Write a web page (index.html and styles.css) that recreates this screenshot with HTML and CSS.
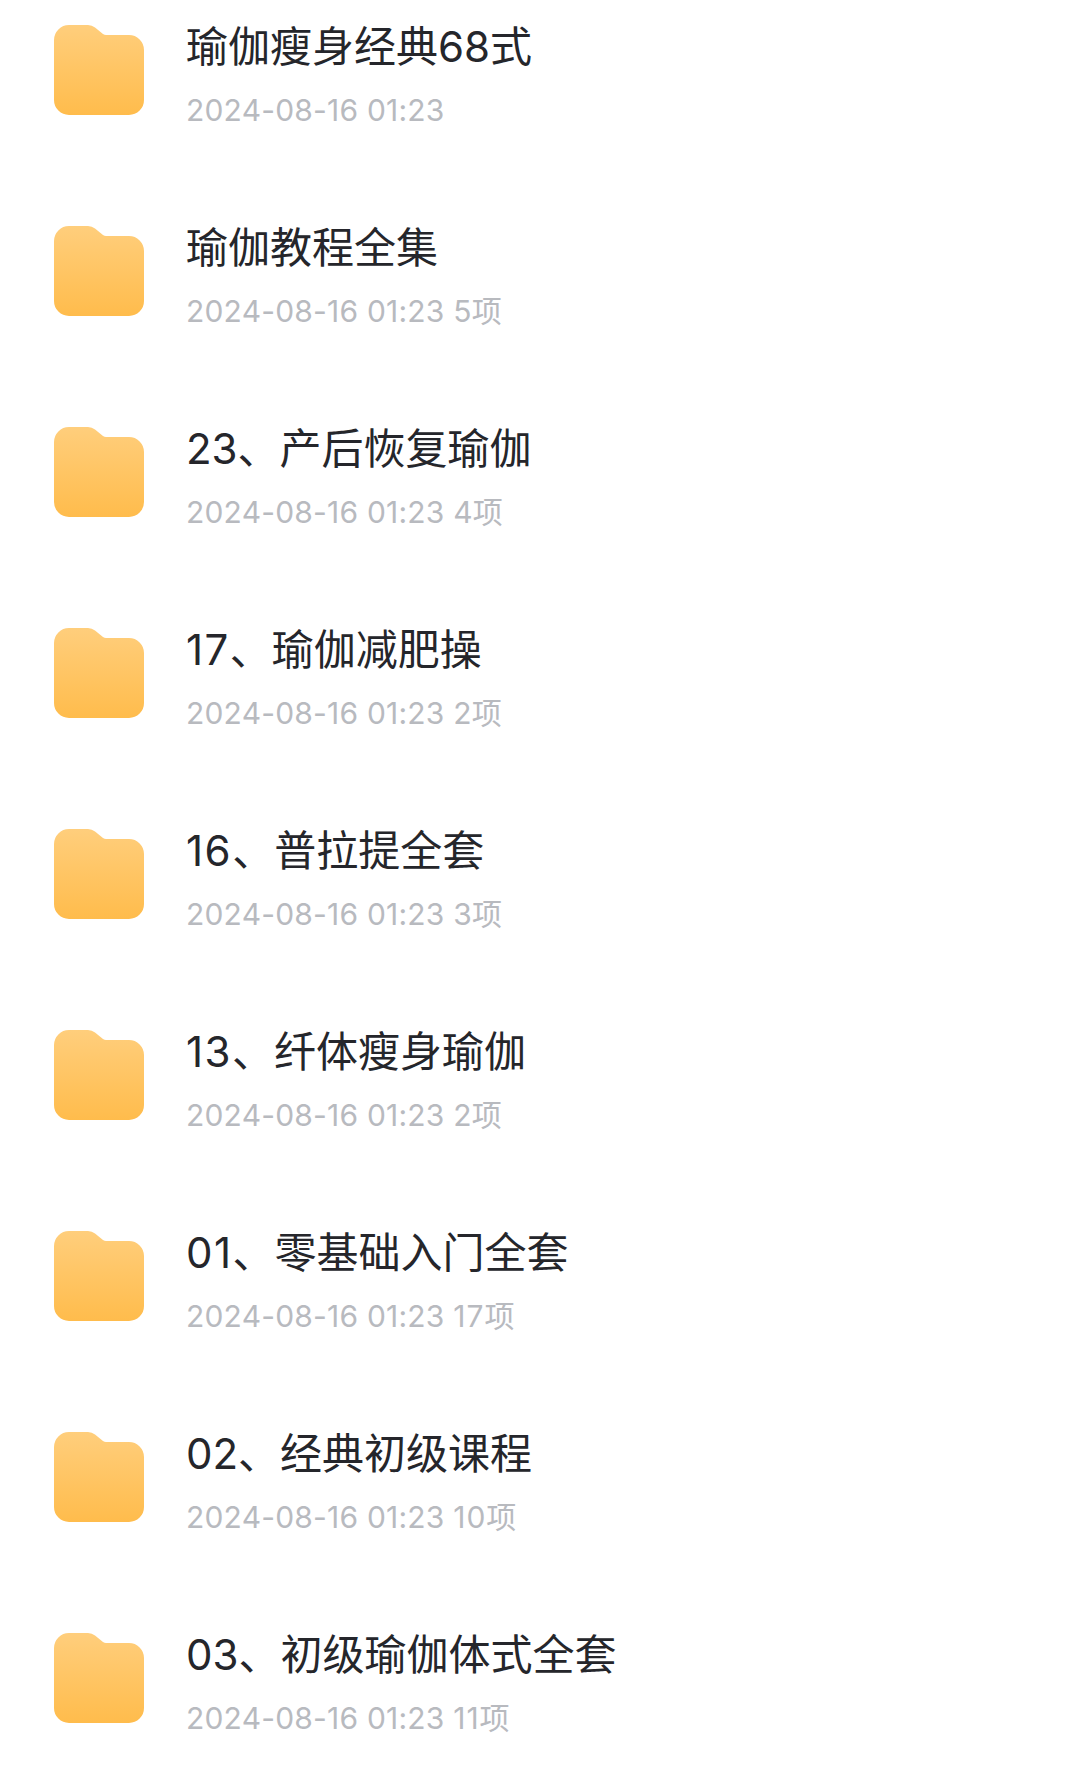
FILE: index.html
```html
<!DOCTYPE html>
<html lang="zh-CN">
<head>
  <meta charset="UTF-8" />
  <meta name="viewport" content="width=device-width, initial-scale=1.0" />
  <title>文件列表</title>
  <link rel="stylesheet" href="styles.css">
</head>
<body>
  <svg class="defs" width="0" height="0">
    <defs>
      <linearGradient id="folderFill" x1="0" y1="0" x2="0" y2="1">
        <stop offset="0" stop-color="#ffce7c" />
        <stop offset="1" stop-color="#ffbc4c" />
      </linearGradient>
      <symbol id="folder" viewBox="0 0 90 90">
        <path fill="url(#folderFill)" d="M15 0H34Q38 0 41 2.5L49 9Q50.500 10 52 10H75A15 15 0 0 1 90 25V75A15 15 0 0 1 75 90H15A15 15 0 0 1 0 75V15A15 15 0 0 1 15 0Z" />
      </symbol>
    </defs>
  </svg>

  <ul class="file-list">
    <li class="file-item">
      <svg class="folder-icon"><use href="#folder" /></svg>
      <div class="file-info">
        <div class="file-name">瑜伽瘦身经典68式</div>
        <div class="file-meta">2024-08-16 01:23</div>
      </div>
    </li>
    <li class="file-item">
      <svg class="folder-icon"><use href="#folder" /></svg>
      <div class="file-info">
        <div class="file-name">瑜伽教程全集</div>
        <div class="file-meta">2024-08-16 01:23 5项</div>
      </div>
    </li>
    <li class="file-item">
      <svg class="folder-icon"><use href="#folder" /></svg>
      <div class="file-info">
        <div class="file-name">23、产后恢复瑜伽</div>
        <div class="file-meta">2024-08-16 01:23 4项</div>
      </div>
    </li>
    <li class="file-item">
      <svg class="folder-icon"><use href="#folder" /></svg>
      <div class="file-info">
        <div class="file-name"><span class="num">17</span>、瑜伽减肥操</div>
        <div class="file-meta">2024-08-16 01:23 2项</div>
      </div>
    </li>
    <li class="file-item">
      <svg class="folder-icon"><use href="#folder" /></svg>
      <div class="file-info">
        <div class="file-name"><span class="num">16</span>、普拉提全套</div>
        <div class="file-meta">2024-08-16 01:23 3项</div>
      </div>
    </li>
    <li class="file-item">
      <svg class="folder-icon"><use href="#folder" /></svg>
      <div class="file-info">
        <div class="file-name"><span class="num">13</span>、纤体瘦身瑜伽</div>
        <div class="file-meta">2024-08-16 01:23 2项</div>
      </div>
    </li>
    <li class="file-item">
      <svg class="folder-icon"><use href="#folder" /></svg>
      <div class="file-info">
        <div class="file-name"><span class="num">01</span>、零基础入门全套</div>
        <div class="file-meta">2024-08-16 01:23 <span class="count">17</span>项</div>
      </div>
    </li>
    <li class="file-item">
      <svg class="folder-icon"><use href="#folder" /></svg>
      <div class="file-info">
        <div class="file-name">02、经典初级课程</div>
        <div class="file-meta">2024-08-16 01:23 <span class="count">10</span>项</div>
      </div>
    </li>
    <li class="file-item">
      <svg class="folder-icon"><use href="#folder" /></svg>
      <div class="file-info">
        <div class="file-name">03、初级瑜伽体式全套</div>
        <div class="file-meta">2024-08-16 01:23 <span class="count">11</span>项</div>
      </div>
    </li>
  </ul>
</body>
</html>
```
FILE: styles.css
```css
body {
  margin: 0;
  background: #fff;
  font-family: Inter, "Noto Sans CJK SC", sans-serif;
  overflow: hidden;
}

.defs {
  position: absolute;
}

.file-list {
  list-style: none;
  margin: 0;
  padding: 0;
}

.file-item {
  display: flex;
  align-items: flex-start;
  height: 201px;
  padding-left: 54px;
}

.folder-icon {
  width: 90px;
  height: 90px;
  margin-top: 25px;
}

.file-info {
  margin: 16px 0 0 42px;
  white-space: nowrap;
}

.file-name {
  font-size: 42px;
  line-height: 62px;
  color: #25262b;
}

.file-name .num {
  letter-spacing: 1.5px;
}

.file-meta {
  margin-top: 11px;
  font-size: 30px;
  line-height: 42px;
  letter-spacing: 0.2px;
  color: #b8babf;
}

.file-meta .count {
  letter-spacing: 1px;
}
```
